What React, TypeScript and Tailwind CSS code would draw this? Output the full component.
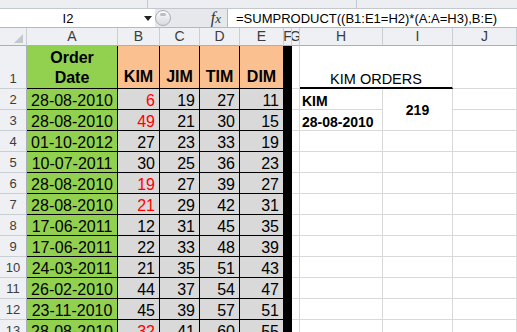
import React from "react";

type Row = { n: number; date: string; v: [number, number, number, number]; red: boolean };

const data: Row[] = [
  { n: 2, date: "28-08-2010", v: [6, 19, 27, 11], red: true },
  { n: 3, date: "28-08-2010", v: [49, 21, 30, 15], red: true },
  { n: 4, date: "01-10-2012", v: [27, 23, 33, 19], red: false },
  { n: 5, date: "10-07-2011", v: [30, 25, 36, 23], red: false },
  { n: 6, date: "28-08-2010", v: [19, 27, 39, 27], red: true },
  { n: 7, date: "28-08-2010", v: [21, 29, 42, 31], red: true },
  { n: 8, date: "17-06-2011", v: [12, 31, 45, 35], red: false },
  { n: 9, date: "17-06-2011", v: [22, 33, 48, 39], red: false },
  { n: 10, date: "24-03-2011", v: [21, 35, 51, 43], red: false },
  { n: 11, date: "26-02-2010", v: [44, 37, 54, 47], red: false },
  { n: 12, date: "23-11-2010", v: [45, 39, 57, 51], red: false },
  { n: 13, date: "28-08-2010", v: [32, 41, 60, 55], red: true },
];

const hdr =
  "bg-[#eef0f3] border-r border-b border-r-[#c9ced4] border-b-[#a9b0b9] text-[#3c3c3c] text-[14px] flex items-center justify-center overflow-hidden";
const rowHdr =
  "bg-[#eef0f3] border-r border-b border-r-[#a9b0b9] border-b-[#c9ced4] text-[#3c3c3c] text-[13px] flex items-end justify-center pb-[3px] leading-none";
const white = "border-r border-b border-[#d9d9d9]";
const num = "bg-[#d9d9d9] border-r border-b border-black flex items-center justify-end pr-[4px] pt-[4px] text-[16px] leading-none";

export default function App() {
  return (
    <div className="w-[517px] h-[332px] overflow-hidden bg-white font-['Liberation_Sans',Arial,sans-serif] text-black">
      {/* ribbon remnant */}
      <div className="flex h-[9px] bg-[#eceef1] border-b border-[#c3c8ce]">
        <div className="w-[148px] border-r border-[#c3c8ce]" />
        <div className="w-[209px] border-r border-[#c3c8ce]" />
        <div className="flex-1" />
      </div>

      {/* formula bar */}
      <div className="flex h-[19px] border-b border-[#b3b9c1]">
        <div className="w-[155px] bg-white flex items-center">
          <span className="w-[136px] text-center text-[13px] leading-none">I2</span>
          <svg width="8" height="5" viewBox="0 0 8 5" className="ml-[8px]">
            <polygon points="0,0 8,0 4,5" fill="#222" />
          </svg>
        </div>
        <div className="w-[72px] bg-[#e6e8eb] flex items-center">
          <div className="w-[16px] h-[16px] rounded-full border border-[#a9afb7] bg-gradient-to-b from-[#fbfbfc] to-[#d6dadf] flex items-start justify-center pt-[2px]">
            <div className="w-[6px] h-[3px] rounded-full bg-[#b9bec5]" />
          </div>
          <span className="ml-auto mr-[6px] font-['Liberation_Serif',serif] italic text-[16px] leading-none text-[#333]">
            f<span className="text-[13px]">x</span>
          </span>
        </div>
        <div className="flex-1 bg-white border-l border-[#b3b9c1] flex items-center pl-[8px] text-[13px] leading-none whitespace-nowrap">
          =SUMPRODUCT((B1:E1=H2)*(A:A=H3),B:E)
        </div>
      </div>

      {/* sheet */}
      <div className="grid grid-cols-[27px_91px_42px_40px_40px_44px_8px_8px_83px_70px_64px] grid-rows-[18px_43px_repeat(12,21px)]">
        {/* header row */}
        <div className={hdr + " items-end justify-end pr-[3px] pb-[2px]"}>
          <svg width="9" height="9" viewBox="0 0 9 9">
            <polygon points="9,0 9,9 0,9" fill="#c3c8cf" />
          </svg>
        </div>
        {["A", "B", "C", "D", "E", "F", "G", "H", "I", "J"].map((c) => (
          <div key={c} className={hdr}>
            {c}
          </div>
        ))}

        {/* row 1 */}
        <div className={rowHdr}>1</div>
        <div className="bg-[#92d050] border-r border-b border-black flex items-end justify-center text-center text-[16px] font-bold leading-[20px]">
          Order
          <br />
          Date
        </div>
        {["KIM", "JIM", "TIM", "DIM"].map((t) => (
          <div
            key={t}
            className="bg-[#fac090] border-r border-b border-black flex items-end justify-center pb-[3px] text-[16px] font-bold leading-none"
          >
            {t}
          </div>
        ))}
        <div className="bg-black" />
        <div className={white} />
        <div className="col-span-2 border-r border-r-[#d9d9d9] border-b-2 border-b-black flex items-end justify-center text-[14.5px] leading-none pb-[1px]">
          KIM ORDERS
        </div>
        <div className={white} />

        {data.map((r) => (
          <React.Fragment key={r.n}>
            <div className={rowHdr}>{r.n}</div>
            <div className="bg-[#92d050] border-r border-b border-black flex items-center justify-center pt-[4px] text-[16px] leading-none">
              {r.date}
            </div>
            {r.v.map((v, i) => (
              <div key={i} className={num + (i === 0 && r.red ? " text-[#ff0000]" : "")}>
                {v}
              </div>
            ))}
            <div className="bg-black" />
            <div className={white} />
            {r.n === 2 ? (
              <>
                <div className={white + " flex items-center pl-[2px] pt-[4px] text-[14px] font-bold leading-none"}>KIM</div>
                <div className={white + " row-span-2 flex items-center justify-center pt-[1px] text-[14px] font-bold leading-none"}>
                  219
                </div>
              </>
            ) : r.n === 3 ? (
              <div className={white + " flex items-center pl-[2px] pt-[4px] text-[14px] font-bold leading-none"}>28-08-2010</div>
            ) : (
              <>
                <div className={white} />
                <div className={white} />
              </>
            )}
            <div className={white} />
          </React.Fragment>
        ))}
      </div>
    </div>
  );
}
